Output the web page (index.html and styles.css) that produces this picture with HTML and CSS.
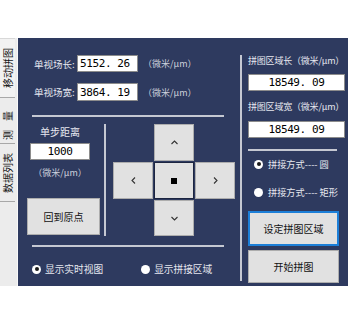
FILE: index.html
```html
<!DOCTYPE html>
<html lang="zh">
<head>
<meta charset="utf-8">
<title>移动拼图</title>
<link rel="stylesheet" href="styles.css">
</head>
<body>
<div class="window">
  <nav class="tabs">
    <div class="tab tab-move active"><span class="tab-text">移动拼图</span></div>
    <div class="tab tab-measure"><span class="tab-text spaced">测量</span></div>
    <div class="tab tab-data"><span class="tab-text">数据列表</span></div>
  </nav>
  <main class="panel">
    <section class="left">
      <div class="field-row">
        <span class="lbl">单视场长:</span>
        <div class="box">5152. 26</div>
        <span class="unit">（微米/μm）</span>
      </div>
      <div class="field-row second">
        <span class="lbl">单视场宽:</span>
        <div class="box">3864. 19</div>
        <span class="unit">（微米/μm）</span>
      </div>
      <div class="hr"></div>
      <div class="middle">
        <div class="step">
          <div class="step-inner">
            <span class="step-title">单步距离</span>
            <div class="box step-box">1000</div>
            <span class="unit step-unit">（微米/μm）</span>
          </div>
          <button class="btn btn-home">回到原点</button>
        </div>
        <div class="vline-mid"></div>
        <div class="dpad">
          <button class="btn pad up"><svg width="7" height="5" viewBox="0 0 7 5"><polyline points="0.5,4 3.5,1 6.5,4" fill="none" stroke="#333" stroke-width="1.1"/></svg></button>
          <button class="btn pad left-btn"><svg width="5" height="7" viewBox="0 0 5 7"><polyline points="4,0.5 1,3.5 4,6.5" fill="none" stroke="#333" stroke-width="1.1"/></svg></button>
          <button class="btn pad center"><span class="stop"></span></button>
          <button class="btn pad right-btn"><svg width="5" height="7" viewBox="0 0 5 7"><polyline points="1,0.5 4,3.5 1,6.5" fill="none" stroke="#333" stroke-width="1.1"/></svg></button>
          <button class="btn pad down"><svg width="7" height="5" viewBox="0 0 7 5"><polyline points="0.5,1 3.5,4 6.5,1" fill="none" stroke="#333" stroke-width="1.1"/></svg></button>
        </div>
      </div>
      <div class="hr hr-bottom"></div>
      <div class="radios">
        <label class="opt"><span class="radio checked"></span>显示实时视图</label>
        <label class="opt opt-second"><span class="radio"></span>显示拼接区域</label>
      </div>
    </section>
    <section class="right">
      <div class="rline"></div>
      <div class="rcontent">
        <span class="rlabel">拼图区域长（微米/μm）</span>
        <div class="box rbox">18549. 09</div>
        <span class="rlabel rlabel-2">拼图区域宽（微米/μm）</span>
        <div class="box rbox">18549. 09</div>
        <div class="rhr"></div>
        <label class="opt ropt"><span class="radio checked"></span>拼接方式---- 圆</label>
        <label class="opt ropt ropt-2"><span class="radio"></span>拼接方式---- 矩形</label>
        <button class="btn btn-set">设定拼图区域</button>
        <button class="btn btn-start">开始拼图</button>
      </div>
    </section>
  </main>
</div>
</body>
</html>
```

FILE: styles.css
```css
* { box-sizing: border-box; }

body {
  margin: 0;
  background: #ffffff;
  width: 348px;
  height: 325px;
  overflow: hidden;
  font-family: "Noto Sans CJK SC", "Noto Sans", sans-serif;
}

.window {
  margin-top: 38px;
  height: 248px;
  display: flex;
}

/* ---------- tabs ---------- */
.tabs {
  width: 18px;
  background: #ececec;
  border-right: 1px solid #f8f8f8;
  display: flex;
  flex-direction: column;
}

.tab {
  display: flex;
  align-items: center;
  justify-content: center;
  border-bottom: 1px solid #a8a8a8;
  margin-right: 2px;
}

.tab-move { height: 60px; background: #f2f2f2; border-top: 1px solid #d8d8d8; }
.tab-measure { height: 46px; }
.tab-data { height: 58px; }

.tab-text {
  writing-mode: vertical-rl;
  text-orientation: sideways;
  transform: rotate(180deg);
  font-size: 10px;
  line-height: 12px;
  color: #141414;
}

.tab-text.spaced { letter-spacing: 9px; }

/* ---------- panel ---------- */
.panel {
  flex: 1;
  background: #2e3a5f;
  display: flex;
}

.left {
  width: 222px;
  padding: 17px 0 0 9px;
  display: flex;
  flex-direction: column;
}

.field-row {
  display: flex;
  align-items: center;
  height: 17px;
  margin-left: 7px;
}

.field-row.second {
  margin-top: 11px;
  height: 18px;
}

.lbl {
  width: 43px;
  font-size: 9.5px;
  color: #e6e8ef;
  white-space: nowrap;
}

.box {
  background: #ffffff;
  border: 1px solid #8c8c8c;
  color: #000;
  font-family: "DejaVu Sans Mono", monospace;
  font-size: 11px;
  letter-spacing: -0.4px;
  white-space: nowrap;
}

.field-row .box {
  width: 61px;
  height: 100%;
  padding-left: 2px;
  display: flex;
  align-items: center;
}

.unit {
  margin-left: 5px;
  font-size: 9px;
  color: #cdd1dd;
  white-space: nowrap;
}

.hr {
  width: 192px;
  height: 2px;
  background: #c5c8d2;
  margin: 14px 0 0 5px;
}

.middle {
  display: flex;
  margin-top: 7px;
  height: 112px;
}

.step {
  width: 73px;
  display: flex;
  flex-direction: column;
}

.step-inner {
  width: 66px;
  display: flex;
  flex-direction: column;
  align-items: center;
}

.step-title {
  margin-top: 1px;
  line-height: 14px;
  font-size: 10px;
  color: #e6e8ef;
}

.step-box {
  width: 60px;
  height: 17px;
  margin-top: 4px;
  display: flex;
  align-items: center;
  justify-content: center;
}

.step-unit {
  margin: 6px 0 0 0;
  line-height: 14px;
}

.btn {
  background: #e1e1e1;
  border: 1px solid #adadad;
  font-family: "Noto Sans CJK SC", sans-serif;
  font-size: 10px;
  color: #111;
  padding: 0;
  display: flex;
  align-items: center;
  justify-content: center;
}

.btn-home {
  width: 73px;
  height: 37px;
  margin-top: 18px;
}

.vline-mid {
  width: 2px;
  height: 112px;
  background: #c5c8d2;
  margin-left: 4px;
}

.dpad {
  margin-left: 7px;
  display: grid;
  grid-template-columns: repeat(3, 40px);
  grid-template-rows: 37px 37px 36px;
  gap: 1px;
}

.pad.up { grid-column: 2; grid-row: 1; }
.pad.left-btn { grid-column: 1; grid-row: 2; }
.pad.center { grid-column: 2; grid-row: 2; border-color: #1c2540; }
.pad.right-btn { grid-column: 3; grid-row: 2; }
.pad.down { grid-column: 2; grid-row: 3; }

.stop {
  width: 6px;
  height: 6px;
  background: #000;
}

.hr-bottom { margin-top: 9px; }

.radios {
  display: flex;
  align-items: center;
  height: 14px;
  margin: 15px 0 0 5px;
}

.opt {
  display: flex;
  align-items: center;
  gap: 4px;
  font-size: 9.7px;
  line-height: 14px;
  color: #e6e8ef;
  white-space: nowrap;
}

.opt-second { margin-left: 38px; }

.radio {
  width: 9px;
  height: 9px;
  border-radius: 50%;
  background: #ffffff;
  display: flex;
  align-items: center;
  justify-content: center;
}

.radio.checked::after {
  content: "";
  width: 4px;
  height: 4px;
  border-radius: 50%;
  background: #1a1a1a;
}

/* ---------- right ---------- */
.right {
  display: flex;
  padding-top: 17px;
}

.rline {
  width: 2px;
  height: 226px;
  background: #c5c8d2;
}

.rcontent {
  margin-left: 6px;
  width: 98px;
  display: flex;
  flex-direction: column;
}

.rlabel {
  font-size: 9px;
  letter-spacing: -0.2px;
  line-height: 11px;
  color: #e6e8ef;
  white-space: nowrap;
}

.rlabel-2 {
  margin-top: 10px;
  line-height: 12px;
}

.rbox {
  width: 97px;
  height: 17px;
  margin-top: 8px;
  display: flex;
  align-items: center;
  justify-content: center;
}

.rhr {
  width: 89px;
  height: 2px;
  background: #c5c8d2;
  margin-top: 11px;
}

.ropt {
  margin: 6px 0 0 6px;
  gap: 5px;
  font-size: 9.2px;
}

.ropt-2 { margin-top: 14px; }

.btn-set {
  width: 91px;
  height: 35px;
  margin-top: 12px;
  border: 2px solid #1c7fd8;
}

.btn-start {
  width: 91px;
  height: 33px;
  margin-top: 4px;
}
```
